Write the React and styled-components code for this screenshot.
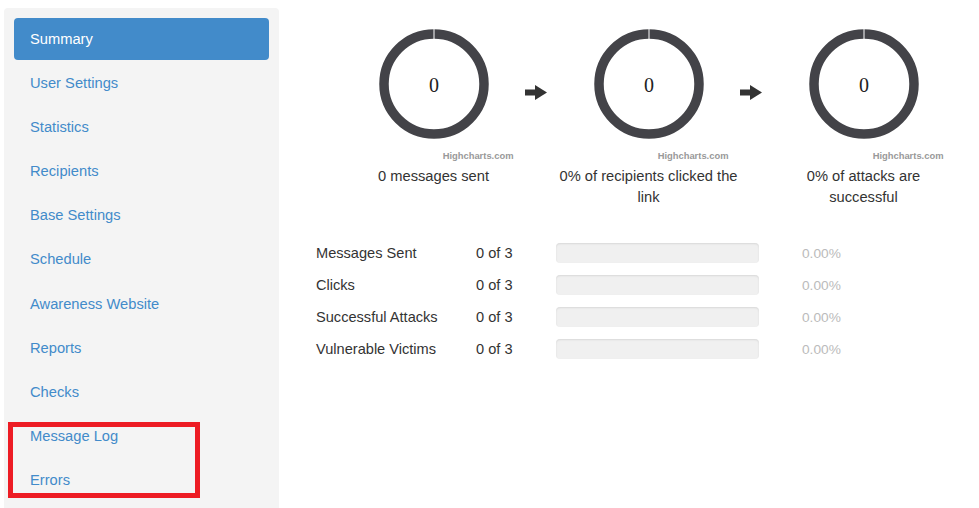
import React from "react";
import styled, { createGlobalStyle } from "styled-components";

const Global = createGlobalStyle`
  html, body { margin: 0; padding: 0; background: #fff; overflow: hidden; }
  body { font-family: "Liberation Sans", Arial, sans-serif; color: #333; }
`;

const Page = styled.div`
  display: flex;
  align-items: flex-start;
  padding: 8px 0 0 4px;
  height: 500px;
  overflow: hidden;
`;

const Sidebar = styled.nav`
  position: relative;
  width: 255px;
  min-height: 520px;
  background: #f4f4f4;
  border-radius: 4px;
  padding: 10px 10px;
  display: flex;
  flex-direction: column;
  gap: 2.1px;
  flex-shrink: 0;
`;

const NavItem = styled.a`
  display: block;
  height: 20px;
  line-height: 20px;
  padding: 11px 16px;
  font-size: 14.7px;
  border-radius: 4px;
  color: ${(p) => (p.$active ? "#fff" : "#428bca")};
  background: ${(p) => (p.$active ? "#428bca" : "transparent")};
  text-decoration: none;
  cursor: pointer;
`;

const Highlight = styled.div`
  position: absolute;
  left: 4px;
  top: 414px;
  width: 182px;
  height: 66px;
  border: 5px solid #ed1c24;
  pointer-events: none;
`;

const Main = styled.main`
  flex: 1;
  padding: 21px 0 0 37px;
  display: flex;
  flex-direction: column;
`;

const ChartsRow = styled.div`
  margin-left: 27.5px;
  display: grid;
  grid-template-columns: 180px 35px 180px 35px 180px;
  align-items: start;
`;

const ChartBlock = styled.div`
  display: flex;
  flex-direction: column;
  align-items: center;
`;

const Credit = styled.div`
  align-self: flex-end;
  padding-right: 10px;
  margin-top: 11px;
  font-size: 9.4px;
  line-height: 11px;
  font-weight: bold;
  color: #999;
  font-family: "Liberation Sans", Arial, sans-serif;
`;

const Caption = styled.div`
  margin-top: 4.5px;
  font-size: 14.7px;
  line-height: 21px;
  text-align: center;
  color: #333;
`;

const ArrowCell = styled.div`
  padding: 56px 0 0 1.5px;
  display: flex;
`;

const Table = styled.div`
  margin-top: 29.5px;
  display: grid;
  grid-template-columns: 160px 80px 203px 43px auto;
  grid-auto-rows: 32px;
  align-items: center;
  font-size: 14.6px;
  color: #333;
`;

const Bar = styled.div`
  height: 20px;
  border-radius: 4px;
  background: #f0f0f0;
  box-shadow: inset 0 1px 2px rgba(0, 0, 0, 0.1);
`;

const Percent = styled.div`
  grid-column: 5;
  color: #bbb;
  font-size: 13.7px;
`;

const Donut = () => (
  <svg width="110" height="110" viewBox="0 0 110 110">
    <circle cx="55" cy="55" r="50" fill="none" stroke="#434348" strokeWidth="9.5" />
    <line x1="55" y1="0" x2="55" y2="11" stroke="#fff" strokeWidth="1" />
    <text
      x="55"
      y="56"
      textAnchor="middle"
      dominantBaseline="central"
      fontFamily="'Liberation Serif', 'Times New Roman', serif"
      fontSize="20"
      fill="#222"
    >
      0
    </text>
  </svg>
);

const Arrow = () => (
  <svg width="22" height="15" viewBox="0 0 22 15">
    <rect x="0" y="4.5" width="11" height="6" fill="#333" />
    <polygon points="10,0 22,7.5 10,15" fill="#333" />
  </svg>
);

const navItems = [
  "Summary",
  "User Settings",
  "Statistics",
  "Recipients",
  "Base Settings",
  "Schedule",
  "Awareness Website",
  "Reports",
  "Checks",
  "Message Log",
  "Errors",
];

const charts = [
  "0 messages sent",
  "0% of recipients clicked the link",
  "0% of attacks are successful",
];

const rows = ["Messages Sent", "Clicks", "Successful Attacks", "Vulnerable Victims"];

export default function App() {
  return (
    <>
      <Global />
      <Page>
        <Sidebar>
          {navItems.map((n, i) => (
            <NavItem key={n} $active={i === 0}>
              {n}
            </NavItem>
          ))}
          <Highlight />
        </Sidebar>
        <Main>
          <ChartsRow>
            {charts.map((c, i) => (
              <React.Fragment key={c}>
                {i > 0 && (
                  <ArrowCell>
                    <Arrow />
                  </ArrowCell>
                )}
                <ChartBlock>
                  <Donut />
                  <Credit>Highcharts.com</Credit>
                  <Caption>{c}</Caption>
                </ChartBlock>
              </React.Fragment>
            ))}
          </ChartsRow>
          <Table>
            {rows.map((r) => (
              <React.Fragment key={r}>
                <div>{r}</div>
                <div>0 of 3</div>
                <Bar />
                <Percent>0.00%</Percent>
              </React.Fragment>
            ))}
          </Table>
        </Main>
      </Page>
    </>
  );
}
